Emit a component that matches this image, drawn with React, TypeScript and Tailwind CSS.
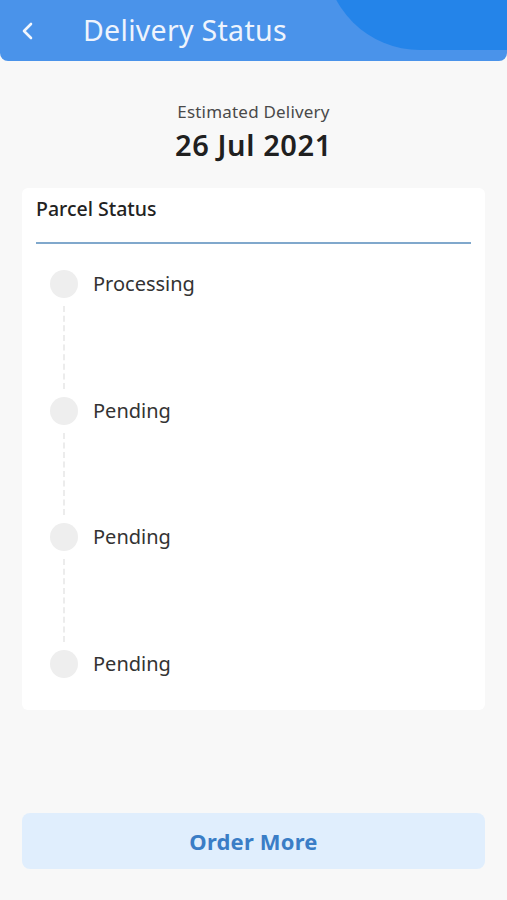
import React from "react";

const steps = ["Processing", "Pending", "Pending", "Pending"];

export default function App() {
  return (
    <div
      className="w-[507px] h-[900px] bg-[#f8f8f8] flex flex-col overflow-hidden"
      style={{ fontFamily: '"Noto Sans", "Open Sans", sans-serif' }}
    >
      <header className="relative h-[61px] shrink-0 bg-[#4a93ea] rounded-b-[8px] overflow-hidden flex items-center">
        <div className="absolute left-[325px] top-[-140px] w-[310px] h-[190px] rounded-full bg-[#2484e9]" />
        <div className="relative flex items-center pl-[18px]">
          <svg width="20" height="20" viewBox="0 0 20 20" className="mr-[45px]">
            <path d="M13 3 L6 10 L13 17" fill="none" stroke="#f2f6fd" strokeWidth="2.6" strokeLinecap="round" strokeLinejoin="round" />
          </svg>
          <span className="text-[28.5px] text-[#eef4fd] leading-none tracking-[0.3px]">Delivery Status</span>
        </div>
      </header>

      <div className="flex flex-col items-center pt-[39px]">
        <div className="text-[17px] text-[#4a4a4a] leading-[24px] tracking-[0.2px]">Estimated Delivery</div>
        <div className="text-[29px] font-semibold text-[#202020] leading-[38px] mt-[2px] tracking-[0.6px]">26 Jul 2021</div>
      </div>

      <div className="mx-[22px] mt-[24px] bg-white rounded-[6px] h-[522px] px-[14px] pt-[7px]">
        <div className="text-[19.5px] font-medium text-[#222] leading-[28px]">Parcel Status</div>
        <div className="h-[2px] bg-[#80a8cc] mt-[19px]" />
        <div className="flex flex-col pt-[26px] pl-[14px]">
          {steps.map((s, i) => (
            <div key={i} className="flex flex-col">
              <div className="flex items-center h-[28px]">
                <div className="w-[28px] h-[28px] rounded-full bg-[#eeeeee]" />
                <span className="ml-[15px] text-[20px] text-[#333] leading-none">{s}</span>
              </div>
              {i < steps.length - 1 && (
                <div className="h-[98.5px] flex justify-start pl-[13px] py-[8px]">
                  <div className="border-l-2 border-dashed border-[#ececec] h-full" />
                </div>
              )}
            </div>
          ))}
        </div>
      </div>

      <div className="flex-1" />
      <button className="mx-[22px] mb-[31px] h-[56px] rounded-[8px] bg-[#e0eefd] text-[22px] font-bold text-[#3a7dc6] tracking-[0.2px]">
        Order More
      </button>
    </div>
  );
}
